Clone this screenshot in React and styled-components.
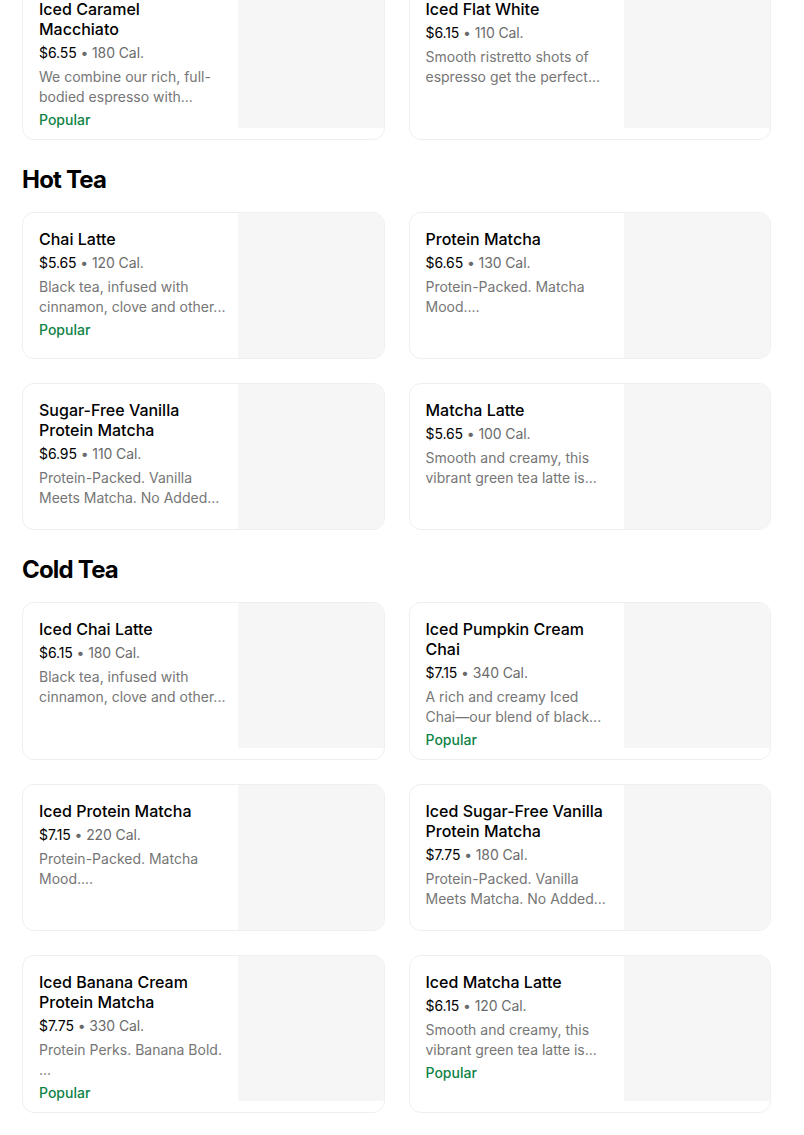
import React from "react";
import styled, { createGlobalStyle } from "styled-components";

const GlobalStyle = createGlobalStyle`
  html, body {
    margin: 0;
    padding: 0;
    background: #ffffff;
    overflow: hidden;
  }
  body {
    font-family: Inter, "Noto Sans", "Liberation Sans", sans-serif;
    color: #000000;
  }
`;

const Page = styled.div`
  width: 749px;
  padding: 0 33px 0 22px;
  margin-top: -18px;
`;

const SectionTitle = styled.h2`
  margin: 24px 0 16px;
  font-size: 24px;
  line-height: 32px;
  font-weight: 700;
  letter-spacing: -0.8px;
`;

const Grid = styled.div`
  display: grid;
  grid-template-columns: 1fr 1fr;
  gap: 24px 24px;
`;

const Card = styled.div`
  display: flex;
  border: 1px solid #efefef;
  border-radius: 12px;
  overflow: hidden;
  background: #ffffff;
`;

const Info = styled.div`
  flex: 1;
  min-width: 0;
  padding: 16px 14px 9px 16px;
  display: flex;
  flex-direction: column;
`;

const Name = styled.div`
  font-size: 16px;
  line-height: 20px;
  font-weight: 500;
  color: #000000;
`;

const Meta = styled.div`
  margin-top: 4px;
  font-size: 14px;
  line-height: 20px;
  color: #6b6b6b;
  letter-spacing: -0.1px;
`;

const Price = styled.span`
  color: #000000;
`;

const Desc = styled.div`
  margin: 4px -6px 0 0;
  font-size: 14px;
  line-height: 20px;
  color: #767676;
  white-space: pre-line;
  display: -webkit-box;
  -webkit-line-clamp: 2;
  -webkit-box-orient: vertical;
  overflow: hidden;
`;

const Badge = styled.div`
  margin-top: 3px;
  font-size: 14px;
  line-height: 20px;
  font-weight: 500;
  color: #0e8345;
`;

const Photo = styled.div`
  width: 146px;
  height: 145px;
  flex-shrink: 0;
  background: #f6f6f6;
`;

const sections = [
  {
    title: null,
    items: [
      {
        name: "Iced Caramel Macchiato",
        price: "$6.55",
        cal: "180 Cal.",
        desc: "We combine our rich, full-bodied espresso with...",
        popular: true,
      },
      {
        name: "Iced Flat White",
        price: "$6.15",
        cal: "110 Cal.",
        desc: "Smooth ristretto shots of espresso get the perfect...",
      },
    ],
  },
  {
    title: "Hot Tea",
    items: [
      {
        name: "Chai Latte",
        price: "$5.65",
        cal: "120 Cal.",
        desc: "Black tea, infused with cinnamon, clove and other...",
        popular: true,
      },
      {
        name: "Protein Matcha",
        price: "$6.65",
        cal: "130 Cal.",
        desc: "Protein-Packed. Matcha Mood....",
      },
      {
        name: "Sugar-Free Vanilla Protein Matcha",
        price: "$6.95",
        cal: "110 Cal.",
        desc: "Protein-Packed. Vanilla Meets Matcha. No Added...",
      },
      {
        name: "Matcha Latte",
        price: "$5.65",
        cal: "100 Cal.",
        desc: "Smooth and creamy, this vibrant green tea latte is...",
      },
    ],
  },
  {
    title: "Cold Tea",
    items: [
      {
        name: "Iced Chai Latte",
        price: "$6.15",
        cal: "180 Cal.",
        desc: "Black tea, infused with cinnamon, clove and other...",
      },
      {
        name: "Iced Pumpkin Cream Chai",
        price: "$7.15",
        cal: "340 Cal.",
        desc: "A rich and creamy Iced\nChai\u2014our blend of black...",
        popular: true,
      },
      {
        name: "Iced Protein Matcha",
        price: "$7.15",
        cal: "220 Cal.",
        desc: "Protein-Packed. Matcha Mood....",
      },
      {
        name: "Iced Sugar-Free Vanilla Protein Matcha",
        price: "$7.75",
        cal: "180 Cal.",
        desc: "Protein-Packed. Vanilla Meets Matcha. No Added...",
      },
      {
        name: "Iced Banana Cream Protein Matcha",
        price: "$7.75",
        cal: "330 Cal.",
        desc: "Protein Perks. Banana Bold.\n...",
        popular: true,
      },
      {
        name: "Iced Matcha Latte",
        price: "$6.15",
        cal: "120 Cal.",
        desc: "Smooth and creamy, this vibrant green tea latte is...",
        popular: true,
      },
    ],
  },
];

function MenuCard({ item }) {
  return (
    <Card>
      <Info>
        <Name>{item.name}</Name>
        <Meta>
          <Price>{item.price}</Price> • {item.cal}
        </Meta>
        <Desc>{item.desc}</Desc>
        {item.popular && <Badge>Popular</Badge>}
      </Info>
      <Photo />
    </Card>
  );
}

export default function App() {
  return (
    <>
      <GlobalStyle />
      <Page>
        {sections.map((section, i) => (
          <section key={i}>
            {section.title && <SectionTitle>{section.title}</SectionTitle>}
            <Grid>
              {section.items.map((item) => (
                <MenuCard key={item.name} item={item} />
              ))}
            </Grid>
          </section>
        ))}
      </Page>
    </>
  );
}
